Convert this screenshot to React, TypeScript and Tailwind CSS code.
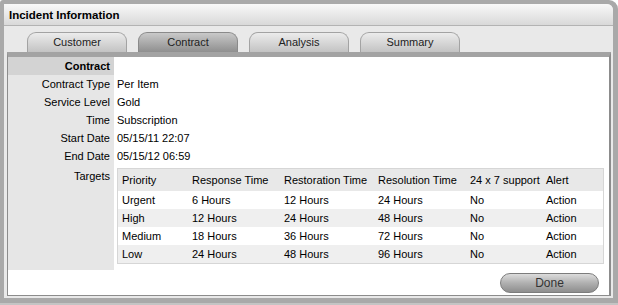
import React from 'react';

const tabs = ['Customer', 'Contract', 'Analysis', 'Summary'];

const details: [string, string][] = [
    ['Contract Type', 'Per Item'],
    ['Service Level', 'Gold'],
    ['Time', 'Subscription'],
    ['Start Date', '05/15/11 22:07'],
    ['End Date', '05/15/12 06:59'],
];

const targets = [
    ['Urgent', '6 Hours', '12 Hours', '24 Hours', 'No', 'Action'],
    ['High', '12 Hours', '24 Hours', '48 Hours', 'No', 'Action'],
    ['Medium', '18 Hours', '36 Hours', '72 Hours', 'No', 'Action'],
    ['Low', '24 Hours', '48 Hours', '96 Hours', 'No', 'Action'],
];

const headers = ['Priority', 'Response Time', 'Restoration Time', 'Resolution Time', '24 x 7 support', 'Alert'];
const colWidths = ['w-[70px]', 'w-[92px]', 'w-[94px]', 'w-[92px]', 'w-[76px]', ''];

const App: React.FC = () => {
    return (
        <div className="w-[618px] h-[305px] bg-white font-['Liberation_Sans',Arial,sans-serif] text-[11px] text-[#000]">
            <div className="w-full h-full bg-[#a9a9a9] rounded-tr-[9px] rounded-tl-[3px] pl-[4px] pt-[4px] pr-[5px] pb-[7px] shadow-[inset_0_-2px_0_#c4c4c4]">
                <div className="h-full bg-[#e9e9e9] rounded-tr-[6px] flex flex-col">
                    {/* Title bar */}
                    <div className="h-[22px] flex items-center pl-[5px] pt-[2px] bg-gradient-to-b from-[#f8f8f8] to-[#d9d9d9] border-b border-[#b3b3b3] rounded-tr-[6px] shrink-0">
                        <span className="font-bold text-[11.5px]">Incident Information</span>
                    </div>

                    {/* Tabs */}
                    <div className="flex gap-[11px] pl-[23px] mt-[6px] h-[20px] shrink-0">
                        {tabs.map((tab) => (
                            <div
                                key={tab}
                                className={`w-[100px] h-[20px] flex items-center justify-center rounded-t-[9px] border border-b-0 text-[11px] text-[#222] ${
                                    tab === 'Contract'
                                        ? 'bg-gradient-to-b from-[#c9c9c9] to-[#8f8f8f] border-[#8a8a8a]'
                                        : 'bg-gradient-to-b from-[#ececec] to-[#c3c3c3] border-[#a3a3a3]'
                                }`}
                            >
                                {tab}
                            </div>
                        ))}
                    </div>

                    {/* Panel */}
                    <div className="ml-[3px] mr-[2px] flex-1 bg-white border-t-[5px] border-t-[#a3a3a3] border-x border-b border-[#8c8c8c] border-r-2 flex flex-col mb-[2px]">
                        <div className="flex">
                            <div className="w-[106px] bg-[#e6e6e6] shrink-0">
                                <div className="h-[18px] bg-[#d3d3d3] flex items-center justify-end pr-[4px] font-bold">Contract</div>
                                {details.map(([label]) => (
                                    <div key={label} className="h-[18px] flex items-center justify-end pr-[4px]">
                                        {label}
                                    </div>
                                ))}
                                <div className="h-[105px] flex justify-end pr-[4px] pt-[3px]">Targets</div>
                            </div>
                            <div className="flex-1 pl-[3px]">
                                <div className="h-[18px]" />
                                {details.map(([label, value]) => (
                                    <div key={label} className="h-[18px] flex items-center">
                                        {value}
                                    </div>
                                ))}
                                <div className="pt-[3px] pr-[5px]">
                                    <div className="border border-[#d6d6d6]">
                                        <div className="flex h-[22px] items-center bg-[#e8e8e8] pl-[4px]">
                                            {headers.map((h, i) => (
                                                <div key={h} className={`${colWidths[i]} ${i === 5 ? 'flex-1' : 'shrink-0'}`}>
                                                    {h}
                                                </div>
                                            ))}
                                        </div>
                                        {targets.map((row, r) => (
                                            <div
                                                key={row[0]}
                                                className={`flex h-[18px] items-center pl-[4px] ${r % 2 === 1 ? 'bg-[#efefef]' : 'bg-white'}`}
                                            >
                                                {row.map((cell, i) => (
                                                    <div key={i} className={`${colWidths[i]} ${i === 5 ? 'flex-1' : 'shrink-0'}`}>
                                                        {cell}
                                                    </div>
                                                ))}
                                            </div>
                                        ))}
                                    </div>
                                </div>
                            </div>
                        </div>
                        <div className="flex-1 flex items-center justify-end pr-[10px]">
                            <button className="w-[99px] h-[20px] rounded-full bg-gradient-to-b from-[#dcdcdc] via-[#b0b0b0] to-[#8e8e8e] border border-[#7c7c7c] text-[12px] text-[#333] flex items-center justify-center">
                                Done
                            </button>
                        </div>
                    </div>
                </div>
            </div>
        </div>
    );
};

export default App;
